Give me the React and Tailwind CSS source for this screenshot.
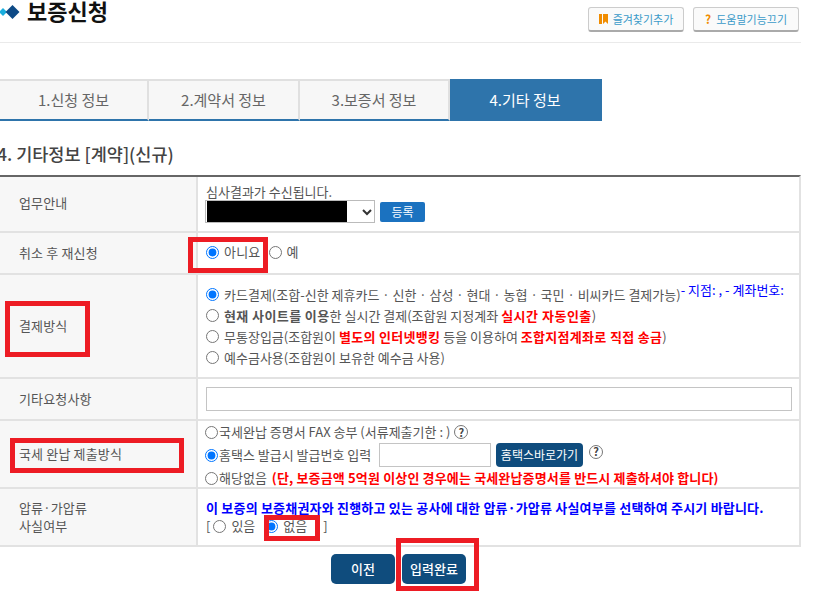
import React from "react";

const Radio = ({ checked, className = "" }) => (
  <input type="radio" defaultChecked={checked} className={`m-0 h-[13px] w-[13px] shrink-0 ${className}`} />
);

const Help = () => (
  <span className="inline-flex h-[14px] w-[14px] items-center justify-center rounded-full border border-[#777] text-[11px] font-bold leading-none text-[#444]">
    ?
  </span>
);

const Row = ({ label, height, children }) => (
  <div className={`flex border-b-2 border-[#e2e2e2] ${height}`}>
    <div className="flex w-[198px] shrink-0 items-center border-r-2 border-[#e2e2e2] bg-[#f7f7f7] pl-[19px] text-[13px] leading-[18px] tracking-[0.15px] text-[#555]">
      {label}
    </div>
    <div className="min-w-0 flex-1 pl-[7px] text-[13px] text-[#555]">{children}</div>
  </div>
);

const Tab = ({ children, active, width }) => (
  <div
    className={`flex h-[42px] items-center justify-center border-r-2 text-[15px] ${width} ${
      active
        ? "border-r-0 border-[#2e74ab] bg-[#2e74ab] text-white"
        : "border-t-2 border-b-2 border-r-[#e0e0e0] border-t-[#e0e0e0] border-b-[#2e74ab] bg-[#f7f7f7] text-[#666]"
    }`}
  >
    {children}
  </div>
);

const RedBox = ({ className }) => <div className={`absolute border-[5px] border-[#ed1c24] ${className}`} />;

const TopButton = ({ children, icon }) => (
  <button className="flex h-[25px] w-full items-center justify-center gap-[5px] rounded-[3px] border border-[#ccc] border-b-2 border-b-[#aaa] bg-[#fafafa] text-[11px] text-[#3b9ac9]">
    {icon}
    {children}
  </button>
);

export default function App() {
  return (
    <div
      className="relative h-[591px] w-[823px] overflow-hidden bg-white"
      style={{ fontFamily: '"Noto Sans CJK KR", "Noto Sans", sans-serif' }}
    >
      <div className="w-[801px]">
        {/* Header */}
        <div className="flex h-[43px] items-start justify-between border-b border-[#eaeaea]">
          <div className="flex items-start">
            <svg width="20" height="20" viewBox="0 0 20 20">
              <path d="M3 8 L7 12 L3 16 L-1 12 Z" fill="#1aaede" />
              <path d="M12.500 5 L19.500 12 L12.500 19 L5.500 12 Z" fill="#0d4a86" />
            </svg>
            <h1 className="ml-[7px] mt-[-4px] text-[22px] font-bold leading-[28px] text-[#111]">보증신청</h1>
          </div>
          <div className="mr-[2px] mt-[7px] flex gap-[9px]">
            <div className="w-[96px]">
              <TopButton
                icon={
                  <svg width="9" height="10" viewBox="0 0 9 10">
                    <path d="M0 0h3v10h-3z M4 0h5v10l-2.500-2.500l-2.500 2.500z" fill="#f08c00" />
                  </svg>
                }
              >
                <span className="whitespace-nowrap">즐겨찾기추가</span>
              </TopButton>
            </div>
            <div className="w-[106px]">
              <TopButton icon={<span className="text-[12px] font-bold text-[#f08c00]">?</span>}>
                <span className="whitespace-nowrap">도움말기능끄기</span>
              </TopButton>
            </div>
          </div>
        </div>

        {/* Tabs */}
        <div className="mt-[36px] flex">
          <Tab width="w-[149px]">1.신청 정보</Tab>
          <Tab width="w-[151px]">2.계약서 정보</Tab>
          <Tab width="w-[150px]">3.보증서 정보</Tab>
          <Tab width="w-[152px]" active>
            4.기타 정보
          </Tab>
        </div>

        <h2 className="mt-[22px] ml-[-3px] text-[17.500px] font-medium leading-[22px] text-[#444]">4. 기타정보 [계약](신규)</h2>

        {/* Form table */}
        <div className="mt-[10px] border-t-2 border-r-2 border-[#e2e2e2] border-t-[#666]">
          <Row label={<span className="mb-[2px]">업무안내</span>} height="h-[56px]">
            <div className="mt-[6px] pl-[1px] leading-[17px]">심사결과가 수신됩니다.</div>
            <div className="flex items-center gap-[5px]">
              <div className="flex h-[23px] w-[170px] items-center border border-[#bbb] pl-px">
                <div className="h-[21px] w-[140px] bg-black" />
                <svg width="12" height="8" viewBox="0 0 12 8" className="ml-[14px]">
                  <path d="M2 2l4 4l4-4" fill="none" stroke="#333" strokeWidth="2" />
                </svg>
              </div>
              <button className="flex h-[20px] w-[45px] items-center justify-center rounded-[2px] bg-[#1b72c0] text-[12px] text-white">
                등록
              </button>
            </div>
          </Row>

          <Row label="취소 후 재신청" height="h-[42px]">
            <div className="flex h-full items-center pb-[2px] pl-[1px]">
              <Radio checked />
              <span className="ml-[5px] tracking-[0.2px]">아니요</span>
              <Radio className="ml-[9px]" />
              <span className="ml-[4px]">예</span>
            </div>
          </Row>

          <Row label="결제방식" height="h-[104px]">
            <div className="flex flex-col pt-[9px] leading-[21px]">
              <div className="flex items-center gap-[5px] whitespace-nowrap pl-[1px]">
                <Radio checked />
                <span>
                  카드결제(조합-신한 제휴카드 · 신한 · 삼성 · 현대 · 농협 · 국민 · 비씨카드 결제가능)
                  <span className="relative -top-[5px] text-[#0000ff]">- 지점: , - 계좌번호:</span>
                </span>
              </div>
              <div className="flex items-center gap-[5px] whitespace-nowrap pl-[1px]">
                <Radio />
                <span>
                  <b className="tracking-[0.4px]">현재 사이트를 이용</b>한 실시간 결제(조합원 지정계좌{" "}
                  <b className="tracking-[0.5px] text-[#ff0000]">실시간 자동인출</b>)
                </span>
              </div>
              <div className="flex items-center gap-[5px] whitespace-nowrap pl-[1px]">
                <Radio />
                <span>
                  무통장입금(조합원이 <b className="tracking-[0.3px] text-[#ff0000]">별도의 인터넷뱅킹</b> 등을 이용하여{" "}
                  <b className="tracking-[0.3px] text-[#ff0000]">조합지점계좌로 직접 송금</b>)
                </span>
              </div>
              <div className="flex items-center gap-[5px] whitespace-nowrap pl-[1px]">
                <Radio />
                <span>예수금사용(조합원이 보유한 예수금 사용)</span>
              </div>
            </div>
          </Row>

          <Row label="기타요청사항" height="h-[42px]">
            <div className="flex h-full items-center pb-[1px] pl-px">
              <input type="text" className="h-[24px] w-[586px] border border-[#c4c4c4] bg-white" />
            </div>
          </Row>

          <Row label="국세 완납 제출방식" height="h-[68px]">
            <div className="pt-[2px] leading-[18px]">
              <div className="flex h-[18px] items-center whitespace-nowrap">
                <Radio />
                <span className="ml-px mr-[4px]">국세완납 증명서 FAX 송부 (서류제출기한 : )</span>
                <Help />
              </div>
              <div className="flex h-[28px] items-center whitespace-nowrap">
                <Radio checked />
                <span className="ml-px w-[160px]">홈택스 발급시 발급번호 입력</span>
                <input type="text" className="h-[24px] w-[112px] border border-[#c4c4c4] bg-white" />
                <button className="ml-[5px] h-[24px] w-[87px] rounded-[4px] bg-[#0f4c7d] text-[12px] text-white">
                  홈택스바로가기
                </button>
                <span className="mb-[8px] ml-[6px]">
                  <Help />
                </span>
              </div>
              <div className="flex h-[18px] items-center whitespace-nowrap">
                <Radio />
                <span className="ml-px">해당없음</span>
                <b className="ml-[5px] tracking-[0.15px] text-[#ff0000]">
                  (단, 보증금액 5억원 이상인 경우에는 국세완납증명서를 반드시 제출하셔야 합니다)
                </b>
              </div>
            </div>
          </Row>

          <Row
            label={
              <span>
                압류·가압류
                <br />
                사실여부
              </span>
            }
            height="h-[58px]"
          >
            <div className="pt-[10px] leading-[18px]">
              <div className="whitespace-nowrap pl-[1px] font-bold tracking-[0.2px] text-[#0000ff]">
                이 보증의 보증채권자와 진행하고 있는 공사에 대한 압류·가압류 사실여부를 선택하여 주시기 바랍니다.
              </div>
              <div className="flex items-center whitespace-nowrap pl-[1px]">
                <span>[</span>
                <Radio className="ml-[3px]" />
                <span className="ml-[5px]">있음</span>
                <Radio checked className="ml-[10px]" />
                <span className="ml-[5px]">없음</span>
                <span className="ml-[16px]">]</span>
              </div>
            </div>
          </Row>
        </div>

        {/* Buttons */}
        <div className="mt-[7px] flex justify-center gap-[7px] pr-[4px]">
          <button className="h-[30px] w-[64px] rounded-[5px] bg-[#0f4c7d] text-[13px] font-medium text-white">이전</button>
          <button className="h-[30px] w-[64px] rounded-[5px] bg-[#0f4c7d] text-[13px] font-medium text-white">입력완료</button>
        </div>
      </div>

      {/* Annotation boxes drawn over the screenshot */}
      <RedBox className="left-[188px] top-[237px] h-[36px] w-[80px]" />
      <RedBox className="left-[5px] top-[301px] h-[56px] w-[85px]" />
      <RedBox className="left-[10px] top-[438px] h-[35px] w-[174px]" />
      <RedBox className="left-[264px] top-[515px] h-[26px] w-[56px]" />
      <RedBox className="left-[396px] top-[538px] h-[53px] w-[83px]" />
    </div>
  );
}
